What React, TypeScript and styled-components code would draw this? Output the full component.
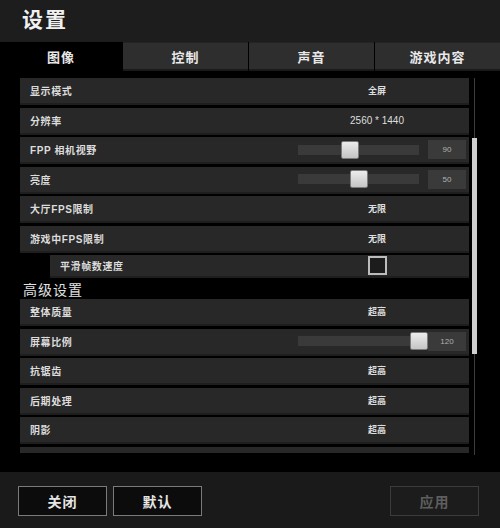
import styled, { createGlobalStyle } from "styled-components";

const GlobalStyle = createGlobalStyle`
  html, body {
    margin: 0;
    padding: 0;
    background: #000;
  }
  body {
    font-family: "Liberation Sans", "Noto Sans CJK SC", sans-serif;
  }
`;

const Page = styled.div`
  width: 500px;
  height: 528px;
  display: flex;
  flex-direction: column;
  background: #000;
  overflow: hidden;
`;

const Header = styled.div`
  height: 42px;
  flex-shrink: 0;
  background: #1d1d1d;
  display: flex;
  align-items: center;
  padding: 0 0 6px 22px;
  box-sizing: border-box;
`;

const Title = styled.h1`
  margin: 0;
  font-size: 21px;
  font-weight: 700;
  color: #f0f0f0;
  letter-spacing: 2px;
`;

const Tabs = styled.div`
  height: 29px;
  flex-shrink: 0;
  display: grid;
  grid-template-columns: 122px 125px 125px 125px;
  column-gap: 1px;
  background: #000;
`;

const Tab = styled.div<{ $active?: boolean }>`
  display: flex;
  align-items: center;
  justify-content: center;
  font-size: 13px;
  font-weight: 700;
  letter-spacing: 1px;
  color: #e8e8e8;
  background: ${(p) => (p.$active ? "#000" : "#2e2e2e")};
  border-top: 1px solid ${(p) => (p.$active ? "#000" : "#242424")};
  border-bottom: 2px solid ${(p) => (p.$active ? "#000" : "#1a1a1a")};
  box-sizing: border-box;
`;

const Content = styled.div`
  flex: 1;
  display: flex;
  align-items: flex-start;
  padding: 7px 0 0 20px;
  gap: 3px;
  overflow: hidden;
`;

const List = styled.div`
  width: 449px;
  height: 375px;
  display: flex;
  flex-direction: column;
  gap: 2.5px;
  overflow: hidden;
`;

const Row = styled.div<{ $indent?: number; $height?: number }>`
  flex-shrink: 0;
  height: ${(p) => p.$height ?? 27}px;
  margin-left: ${(p) => p.$indent ?? 0}px;
  display: grid;
  grid-template-columns: ${(p) => 265 - (p.$indent ?? 0)}px 1fr;
  align-items: center;
  background: #282828;
  border-bottom: 2px solid #1e1e1e;
  box-sizing: border-box;
`;

const Label = styled.span`
  padding-left: 10px;
  font-size: 10px;
  font-weight: 700;
  letter-spacing: 0.6px;
  color: #dcdcdc;
`;

const Value = styled.span<{ $plain?: boolean }>`
  text-align: center;
  font-size: ${(p) => (p.$plain ? 10 : 9)}px;
  font-weight: ${(p) => (p.$plain ? 400 : 700)};
  color: #dedede;
`;

const SliderWrap = styled.div`
  display: flex;
  align-items: center;
  padding-left: 13px;
  gap: 9px;
`;

const Track = styled.div`
  position: relative;
  width: 121px;
  height: 10px;
  background: #3a3a3a;
`;

const Thumb = styled.div`
  position: absolute;
  top: 50%;
  width: 18px;
  height: 18px;
  transform: translate(-50%, -50%);
  background: linear-gradient(#ececec, #c4c4c4);
  border: 1px solid #7a7a7a;
  border-radius: 2px;
  box-sizing: border-box;
`;

const NumBox = styled.div`
  width: 38px;
  height: 19px;
  display: flex;
  align-items: center;
  justify-content: center;
  background: #3a3a3a;
  font-size: 8px;
  color: #b0b0b0;
`;

const CheckCell = styled.div`
  display: flex;
  justify-content: center;
`;

const Checkbox = styled.div`
  width: 19px;
  height: 19px;
  border: 2px solid #bcbcbc;
  background: #1c1c1c;
  box-sizing: border-box;
`;

const Section = styled.div`
  flex-shrink: 0;
  height: 16px;
  display: flex;
  align-items: center;
  padding-left: 3px;
  font-size: 14px;
  letter-spacing: 1px;
  color: #e2e2e2;
`;

const Scrollbar = styled.div`
  position: relative;
  width: 5px;
  height: 377px;
  &::before {
    content: "";
    position: absolute;
    left: 2px;
    top: 0;
    bottom: 0;
    width: 1px;
    background: #3c3c3c;
  }
`;

const ScrollThumb = styled.div`
  position: absolute;
  left: 0;
  top: 60px;
  width: 5px;
  height: 216px;
  background: #cfcfcf;
`;

const Footer = styled.div`
  height: 56px;
  flex-shrink: 0;
  background: #1a1a1a;
  display: flex;
  align-items: flex-start;
  padding: 14px 21px 0 18px;
  gap: 6px;
  box-sizing: border-box;
`;

const Button = styled.button<{ $disabled?: boolean }>`
  width: 89px;
  height: 30px;
  margin: 0;
  padding: 0;
  font-family: inherit;
  font-size: 14px;
  font-weight: 700;
  letter-spacing: 1px;
  color: ${(p) => (p.$disabled ? "#5e5e5e" : "#e6e6e6")};
  background: ${(p) => (p.$disabled ? "#1c1c1c" : "#0c0c0c")};
  border: 1px solid ${(p) => (p.$disabled ? "#3c3c3c" : "#7a7a7a")};
  margin-left: ${(p) => (p.$disabled ? "auto" : "0")};
`;

type Item =
  | { kind: "value"; label: string; value: string; plain?: boolean }
  | { kind: "slider"; label: string; value: number; pct: number }
  | { kind: "check"; label: string }
  | { kind: "section"; label: string };

const items: Item[] = [
  { kind: "value", label: "显示模式", value: "全屏" },
  { kind: "value", label: "分辨率", value: "2560 * 1440", plain: true },
  { kind: "slider", label: "FPP 相机视野", value: 90, pct: 43 },
  { kind: "slider", label: "亮度", value: 50, pct: 50 },
  { kind: "value", label: "大厅FPS限制", value: "无限" },
  { kind: "value", label: "游戏中FPS限制", value: "无限" },
  { kind: "check", label: "平滑帧数速度" },
  { kind: "section", label: "高级设置" },
  { kind: "value", label: "整体质量", value: "超高" },
  { kind: "slider", label: "屏幕比例", value: 120, pct: 100 },
  { kind: "value", label: "抗锯齿", value: "超高" },
  { kind: "value", label: "后期处理", value: "超高" },
  { kind: "value", label: "阴影", value: "超高" },
  { kind: "value", label: "", value: "" },
];

const renderItem = (item: Item, i: number) => {
  switch (item.kind) {
    case "section":
      return <Section key={i}>{item.label}</Section>;
    case "check":
      return (
        <Row key={i} $indent={30} $height={23}>
          <Label>{item.label}</Label>
          <CheckCell>
            <Checkbox />
          </CheckCell>
        </Row>
      );
    case "slider":
      return (
        <Row key={i}>
          <Label>{item.label}</Label>
          <SliderWrap>
            <Track>
              <Thumb style={{ left: `${item.pct}%` }} />
            </Track>
            <NumBox>{item.value}</NumBox>
          </SliderWrap>
        </Row>
      );
    default:
      return (
        <Row key={i}>
          <Label>{item.label}</Label>
          <Value $plain={item.plain}>{item.value}</Value>
        </Row>
      );
  }
};

export default function App() {
  return (
    <Page>
      <GlobalStyle />
      <Header>
        <Title>设置</Title>
      </Header>
      <Tabs>
        <Tab $active>图像</Tab>
        <Tab>控制</Tab>
        <Tab>声音</Tab>
        <Tab>游戏内容</Tab>
      </Tabs>
      <Content>
        <List>{items.map(renderItem)}</List>
        <Scrollbar>
          <ScrollThumb />
        </Scrollbar>
      </Content>
      <Footer>
        <Button>关闭</Button>
        <Button>默认</Button>
        <Button $disabled>应用</Button>
      </Footer>
    </Page>
  );
}
